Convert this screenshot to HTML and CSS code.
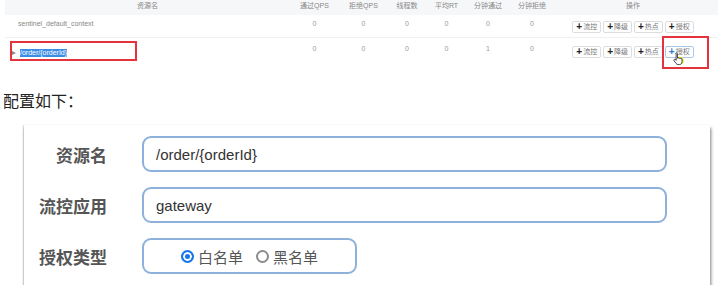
FILE: index.html
```html
<!DOCTYPE html>
<html lang="zh-CN">
<head>
    <meta charset="UTF-8">
    <meta name="viewport" content="width=device-width, initial-scale=1.0">
    <title>授权规则</title>
    <link rel="stylesheet" href="styles.css">
</head>
<body>
    <div class="shot">
        <div class="grid head">
            <span class="cell">资源名</span>
            <span class="cell">通过QPS</span>
            <span class="cell">拒绝QPS</span>
            <span class="cell">线程数</span>
            <span class="cell">平均RT</span>
            <span class="cell">分钟通过</span>
            <span class="cell">分钟拒绝</span>
            <span class="cell">操作</span>
        </div>
        <div class="grid row first">
            <span class="cell name">sentinel_default_context</span>
            <span class="cell">0</span><span class="cell">0</span><span class="cell">0</span>
            <span class="cell">0</span><span class="cell">0</span><span class="cell">0</span>
            <span class="cell ops">
                <span class="btn"><b>+</b>流控</span><span class="btn"><b>+</b>降级</span><span class="btn"><b>+</b>热点</span><span class="btn"><b>+</b>授权</span>
            </span>
        </div>
        <div class="grid row second">
            <span class="cell name"><i class="arrow"></i><span class="sel">/order/{orderId}</span></span>
            <span class="cell">0</span><span class="cell">0</span><span class="cell">0</span>
            <span class="cell">0</span><span class="cell">1</span><span class="cell">0</span>
            <span class="cell ops">
                <span class="btn"><b>+</b>流控</span><span class="btn"><b>+</b>降级</span><span class="btn"><b>+</b>热点</span><span class="btn hover"><b>+</b>授权</span>
            </span>
        </div>
        <span class="mark mark-name"></span>
        <span class="mark mark-btn"></span>
        <svg class="cursor" width="12" height="14" viewBox="0 0 14 16">
            <circle cx="8" cy="10" r="4.5" fill="#dfe62b" opacity="0.9"/>
            <path d="M4 1c.8 0 1.3.6 1.3 1.3V7h.3c.5-.4 1.4-.3 1.8.2.5-.3 1.3-.2 1.7.3.5-.2 1.2 0 1.4.5V11c0 2-1.2 3.5-3 3.5H6c-1 0-1.8-.5-2.4-1.3L1.2 10c-.4-.6-.2-1.3.4-1.6.5-.3 1.2-.1 1.5.4l.6.8V2.3C2.7 1.6 3.2 1 4 1z" fill="#fff" stroke="#111" stroke-width="0.9"/>
        </svg>
    </div>

    <p class="caption">配置如下：</p>

    <div class="card">
        <label class="label">资源名</label>
        <div class="input">/order/{orderId}</div>
        <label class="label">流控应用</label>
        <div class="input">gateway</div>
        <label class="label">授权类型</label>
        <div class="input radios">
            <span class="radio on"></span><span class="opt">白名单</span>
            <span class="radio"></span><span class="opt">黑名单</span>
        </div>
    </div>
</body>
</html>
```

FILE: styles.css
```css
body { margin: 0; background: #fff; font-family: "Noto Sans CJK SC", sans-serif; }

.shot { position: relative; height: 72px; padding-left: 5px; font-family: "Liberation Sans", "Noto Sans CJK SC", sans-serif; font-size: 7px; color: #999; }
.grid { display: grid; grid-template-columns: 285px 49px 49px 38px 41px 42px 46px 156px; width: 713px; }
.cell { text-align: center; line-height: 10px; white-space: nowrap; }
.head { height: 15px; background: #f6f7f9; color: #888; padding-top: 1px; box-sizing: border-box; }
.row { box-sizing: border-box; }
.row.first { height: 23px; padding-top: 4px; border-bottom: 1px solid #f0f0f0; }
.row.second { height: 24px; padding-top: 6px; }
.name { text-align: left; padding-left: 13px; color: #888; }
.second .name { padding-left: 7px; display: flex; align-items: center; }
.arrow { width: 0; height: 0; border-left: 4px solid #888; border-top: 2.5px solid transparent; border-bottom: 2.5px solid transparent; margin-right: 4px; }
.sel { background: #3d8de6; color: #fff; line-height: 8px; }
.ops { display: flex; justify-content: center; gap: 2px; margin-top: 2px; }
.btn { display: flex; align-items: center; height: 12px; box-sizing: border-box; padding: 0 3px; border: 1px solid #ddd; border-radius: 2px; background: #fff; color: #777; }
.btn b { color: #222; font-size: 10px; margin-right: 1px; }
.btn.hover { border-color: #a9c8ea; }
.btn.hover b { color: #2f7bd2; }

.mark { position: absolute; border: 2px solid #e5333d; box-sizing: border-box; }
.mark-name { left: 10px; top: 41px; width: 127px; height: 20px; }
.mark-btn { left: 662px; top: 36px; width: 47px; height: 33px; }
.cursor { position: absolute; left: 673px; top: 52px; }

.caption { margin: 18px 0 0 3px; font-size: 16px; line-height: 20px; color: #222; }

.card { display: grid; grid-template-columns: 83px 525px; column-gap: 35px; row-gap: 15px; align-items: center; align-content: start; margin: 15px 0 0 24px; width: 686px; height: 160px; padding-top: 11px; box-sizing: border-box; background: #fff; box-shadow: 1px 3px 3px rgba(0, 0, 0, 0.5), -1px 0 1px rgba(0, 0, 0, 0.12); }
.label { text-align: right; font-size: 17px; font-weight: bold; color: #555; }
.input { height: 36px; box-sizing: border-box; border: 2px solid #8db1db; border-radius: 9px; padding-left: 12px; display: flex; align-items: center; font-family: "Liberation Sans", sans-serif; font-size: 15px; color: #333; }
.radios { width: 215px; padding-left: 0; justify-content: center; font-family: "Noto Sans CJK SC", sans-serif; color: #555; }
.radio { width: 13px; height: 13px; box-sizing: border-box; border-radius: 50%; border: 2px solid #8c8c8c; margin-right: 4px; }
.radio.on { border-color: #1677e8; background: #1677e8; box-shadow: inset 0 0 0 2px #fff; }
.opt { margin-right: 13px; }
.opt:last-child { margin-right: 0; }
```
